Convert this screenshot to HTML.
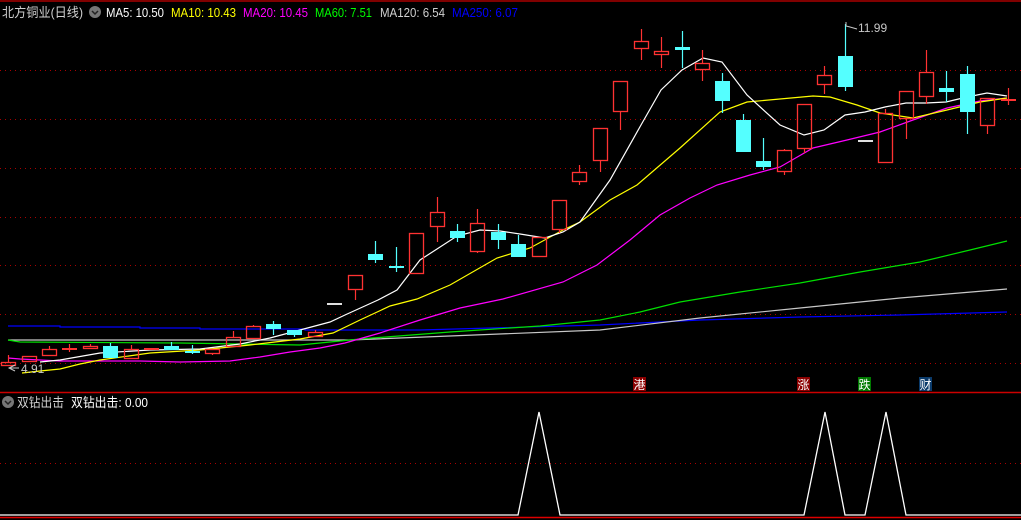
<!DOCTYPE html>
<html><head><meta charset="utf-8"><style>
html,body{margin:0;padding:0;background:#000;width:1021px;height:520px;overflow:hidden}
svg{display:block}
text{font-family:"Liberation Sans","Noto Sans CJK SC",sans-serif}
</style></head><body>
<svg id="s" width="1021" height="520" viewBox="0 0 1021 520" xmlns="http://www.w3.org/2000/svg">
<rect width="1021" height="520" fill="#000"/>
<line x1="0" y1="1" x2="1021" y2="1" stroke="#a00" stroke-width="1.5"/>
<g stroke="#a00" stroke-width="1" stroke-dasharray="1,4">
<line x1="0" y1="70.5" x2="1021" y2="70.5"/><line x1="0" y1="119.5" x2="1021" y2="119.5"/>
<line x1="0" y1="168.5" x2="1021" y2="168.5"/><line x1="0" y1="217.5" x2="1021" y2="217.5"/>
<line x1="0" y1="265.5" x2="1021" y2="265.5"/><line x1="0" y1="314.5" x2="1021" y2="314.5"/>
<line x1="0" y1="363.5" x2="1021" y2="363.5"/><line x1="0" y1="463.5" x2="1021" y2="463.5"/>
</g>
<line x1="0" y1="392.5" x2="1021" y2="392.5" stroke="#c00" stroke-width="1.5"/>
<line x1="0" y1="517.5" x2="1021" y2="517.5" stroke="#d00" stroke-width="1.5"/>
<g fill="none" stroke-width="1.2">
<polyline stroke="#0000ff" points="8,326 60,326 60,327 140,327 140,328 200,328 200,329 305,329 305,330 420,330 600,325 700,320 800,317 900,315 1007,312"/>
<polyline stroke="#c8c8c8" points="8,340 300,340 350,340 600,330 700,318 800,308 900,298 1007,289"/>
<polyline stroke="#00e000" points="8,340 20,342 180,343 300,345 360,339 450,332 540,326 600,320 640,312 680,302 740,292 800,283 860,272 920,262 970,250 1007,241"/>
<polyline stroke="#ff00ff" points="8,358 20,359 60,361 140,361 180,362 230,361 260,357 290,352 320,348 345,343 380,333 420,320 460,308 503,299 563,282 597,265 630,240 660,215 690,198 717,185 750,175 780,167 813,148 847,140 880,132 913,120 947,108 980,101 1007,98"/>
<polyline stroke="#ffff00" points="22,373 40,371 60,369 80,364 100,360 150,353 200,350 250,345 300,339 333,333 360,320 390,306 417,299 450,285 497,258 530,248 563,230 580,222 610,200 637,185 680,148 720,112 747,102 813,96 830,97 857,105 880,113 913,118 947,110 980,102 1007,98"/>
<polyline stroke="#ffffff" points="40,362 60,360 100,353 150,350 200,349 240,344 270,338 300,330 330,322 345,315 378,300 397,290 420,260 437,249 457,236 480,230 500,231 520,234 545,238 563,232 580,222 610,180 641,125 661,90 682,70 703,58 722,62 747,95 780,125 804,135 824,130 845,115 865,112 885,107 906,103 926,103 946,102 967,97 987,93 1007,96"/>
</g>
<g id="c"></g>
<text x="858" y="32" fill="#c8c8c8" font-size="12">11.99</text>
<polyline points="846,22 846,26 850,27 857,29" fill="none" stroke="#c8c8c8" stroke-width="1"/>
<text x="21" y="373" fill="#c8c8c8" font-size="12">4.91</text>
<line x1="9" y1="368" x2="19" y2="368" stroke="#c8c8c8"/>
<path d="M15,365 L9,368 L15,371" fill="none" stroke="#c8c8c8"/>
<rect x="633" y="377" width="13" height="14" fill="#8b0000"/><text x="633.5" y="389" fill="#fff" font-size="12">港</text>
<rect x="797" y="377" width="13" height="14" fill="#8b0000"/><text x="797.5" y="389" fill="#fff" font-size="12">涨</text>
<rect x="858" y="377" width="13" height="14" fill="#007a00"/><text x="858.5" y="389" fill="#fff" font-size="12">跌</text>
<rect x="919" y="377" width="13" height="14" fill="#0a3a6a"/><text x="919.5" y="389" fill="#fff" font-size="12">财</text>
<polyline fill="none" stroke="#fff" stroke-width="1.3" points="0,515 518,515 539,412 560,515 804,515 825,412 845,515 865,515 886,412 906,515 1021,515"/>
<circle cx="95" cy="12" r="6" fill="#777"/><path d="M92,11 L95,14 L98,11" fill="none" stroke="#222" stroke-width="1.5"/>
<circle cx="8" cy="402" r="6" fill="#777"/><path d="M5,401 L8,404 L11,401" fill="none" stroke="#222" stroke-width="1.5"/>
<g font-size="13">
<text x="2" y="17" fill="#d0d0d0" textLength="81" lengthAdjust="spacingAndGlyphs">北方铜业(日线)</text>
<text x="106" y="17" fill="#fff" textLength="58" lengthAdjust="spacingAndGlyphs">MA5: 10.50</text>
<text x="171" y="17" fill="#ffff00" textLength="65" lengthAdjust="spacingAndGlyphs">MA10: 10.43</text>
<text x="243" y="17" fill="#ff00ff" textLength="65" lengthAdjust="spacingAndGlyphs">MA20: 10.45</text>
<text x="315" y="17" fill="#00ff00" textLength="57" lengthAdjust="spacingAndGlyphs">MA60: 7.51</text>
<text x="380" y="17" fill="#d0d0d0" textLength="65" lengthAdjust="spacingAndGlyphs">MA120: 6.54</text>
<text x="452" y="17" fill="#0000ff" textLength="66" lengthAdjust="spacingAndGlyphs">MA250: 6.07</text>
<text x="17" y="407" fill="#d0d0d0" textLength="47" lengthAdjust="spacingAndGlyphs">双钻出击</text>
<text x="71" y="407" fill="#fff" textLength="77" lengthAdjust="spacingAndGlyphs">双钻出击: 0.00</text>
</g>
</svg>
<script>
var d=[[8,362,366,355,366,'R'],[29,356,362,356,362,'R'],[49,349,356,346,356,'R'],[69,348,350,344,352,'R'],[90,346,349,344,349,'R'],[110,346,358,343,358,'C'],[131,349,359,345,359,'R'],[151,348,350,348,350,'R'],[171,346,350,342,350,'C'],[192,351,353,345,354,'C'],[212,349,354,349,355,'R'],[233,337,347,331,347,'R'],[253,326,339,325,339,'R'],[273,324,329,321,335,'C'],[294,330,335,330,337,'C'],[315,332,337,330,337,'R'],[334,303,304,303,304,'W'],[355,275,290,275,300,'R'],[375,254,260,241,263,'C'],[396,266,267,247,272,'C'],[416,233,274,233,274,'R'],[437,212,227,197,242,'R'],[457,231,238,224,242,'C'],[477,223,252,209,253,'R'],[498,232,240,224,249,'C'],[518,244,257,235,257,'C'],[539,237,257,237,257,'R'],[559,200,230,200,233,'R'],[579,172,182,165,185,'R'],[600,128,161,128,172,'R'],[620,81,112,81,130,'R'],[641,41,49,29,60,'R'],[661,51,55,37,68,'R'],[682,47,50,31,68,'C'],[702,63,70,50,81,'R'],[722,81,101,73,113,'C'],[743,120,152,114,152,'C'],[763,161,167,138,170,'C'],[784,150,172,149,175,'R'],[804,104,149,104,153,'R'],[824,75,85,66,94,'R'],[845,56,87,24,91,'C'],[865,140,141,140,141,'W'],[885,113,163,109,163,'R'],[906,91,119,91,139,'R'],[926,72,97,50,104,'R'],[946,88,92,71,102,'C'],[967,74,112,66,134,'C'],[987,98,126,98,134,'R'],[1008,99,101,88,105,'R']];
var h='';d.forEach(function(c){var x=c[0],t=c[1],b=c[2],hi=c[3],lo=c[4],k=c[5];
var col=k=='R'?'#ff3232':(k=='C'?'#54ffff':'#e0e0e0');
if(hi<t)h+='<line x1="'+(x+.5)+'" y1="'+hi+'" x2="'+(x+.5)+'" y2="'+t+'" stroke="'+col+'" stroke-width="1.2"/>';
if(lo>b)h+='<line x1="'+(x+.5)+'" y1="'+b+'" x2="'+(x+.5)+'" y2="'+lo+'" stroke="'+col+'" stroke-width="1.2"/>';
if(k=='R'){if(b-t<3)h+='<rect x="'+(x-7)+'" y="'+t+'" width="15" height="'+Math.max(2,b-t)+'" fill="'+col+'"/>';else h+='<rect x="'+(x-6.5)+'" y="'+(t+.5)+'" width="14" height="'+(b-t-1)+'" fill="none" stroke="'+col+'" stroke-width="1.3"/>';}
else h+='<rect x="'+(x-7)+'" y="'+t+'" width="15" height="'+Math.max(2,b-t)+'" fill="'+col+'"/>';});
document.getElementById('c').innerHTML=h;
</script>
</body></html>
